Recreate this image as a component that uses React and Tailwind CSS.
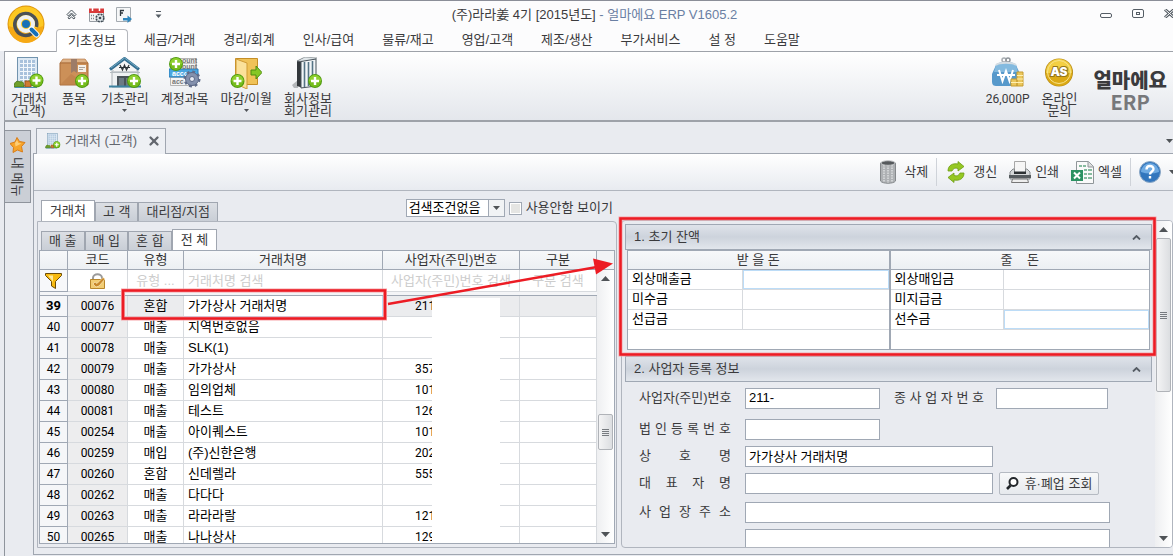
import { useState } from 'react';
import { FiX } from 'react-icons/fi';

const menus = ['세금/거래', '경리/회계', '인사/급여', '물류/재고', '영업/고객', '제조/생산', '부가서비스', '설 정', '도움말'];

const customers = [
  { no: 39, code: '00076', type: '혼합', name: '가가상사 거래처명', biz: '211' },
  { no: 40, code: '00077', type: '매출', name: '지역번호없음', biz: '' },
  { no: 41, code: '00078', type: '매출', name: 'SLK(1)', biz: '' },
  { no: 42, code: '00079', type: '매출', name: '가가상사', biz: '357' },
  { no: 43, code: '00080', type: '매출', name: '임의업체', biz: '101' },
  { no: 44, code: '00081', type: '매출', name: '테스트', biz: '126' },
  { no: 45, code: '00254', type: '매출', name: '아이퀘스트', biz: '101' },
  { no: 46, code: '00259', type: '매입', name: '(주)신한은행', biz: '202' },
  { no: 47, code: '00260', type: '혼합', name: '신데렐라', biz: '555' },
  { no: 48, code: '00262', type: '매출', name: '다다다', biz: '' },
  { no: 49, code: '00263', type: '매출', name: '라라라랄', biz: '121' },
  { no: 50, code: '00265', type: '매출', name: '나나상사', biz: '129' },
];

const receivables = [
  { label: '외상매출금', active: true },
  { label: '미수금' },
  { label: '선급금' },
];

const payables = [
  { label: '외상매입금' },
  { label: '미지급금' },
  { label: '선수금', active: true },
];

const Plus = ({ x, y }) => (
  <g transform={`translate(${x} ${y})`}>
    <circle r="7" fill="#4f9a10" />
    <circle r="6" fill="#76bd1c" />
    <path d="M-6 0a6 6 0 0 1 12 0z" fill="#8fd02f" />
    <path d="M0-4v8M-4 0h8" stroke="#fff" strokeWidth="2.4" />
  </g>
);

const BuildingIcon = ({ className = 'w-[30px] h-8' }) => (
  <svg className={className} viewBox="0 0 30 32">
    <rect x="3.500" y=".5" width="20" height="28" fill="#dbe8f4" stroke="#7193ae" />
    <path d="M6 3h15v21H6z" fill="#a9c2dc" />
    <path d="M9.500 3v21M13.500 3v21M17.500 3v21M6 6.500h15M6 10.500h15M6 14.500h15M6 18.500h15M6 22.500h15" stroke="#f3f8fc" />
    <path d="M0 30c0-5 3-7 6-5 3-1 4 1 4 5z" fill="#6f9f2a" stroke="#4c7a1d" />
    <path d="M11 24h6v6h-6z" fill="#d07a34" stroke="#9a531d" />
    <path d="M1 30.500h22" stroke="#4b8fb0" />
    <Plus x={22.5} y={23.5} />
  </svg>
);

const BoxIcon = () => (
  <svg className="h-8 w-[30px]" viewBox="0 0 30 32">
    <path d="M4 2h22l3 4v22H1V6z" fill="#c98b52" />
    <path d="M4 2h22l3 4H1z" fill="#ddb186" stroke="#b1743f" strokeWidth=".6" />
    <path d="M1 6h28v22H1z" fill="#cc9058" stroke="#a96c3a" />
    <path d="M1 28L12 17l17 11z" fill="#bd7f49" opacity=".6" />
    <path d="M12 2h6v14l-3-2-3 2z" fill="#9d7c68" />
    <path d="M19 8h8v7h-8z" fill="#f5efe8" />
    <path d="M20 10.500h6M20 12.500h4" stroke="#a9a39c" />
    <Plus x={23} y={24} />
  </svg>
);

const HouseIcon = () => (
  <svg className="h-8 w-8" viewBox="0 0 32 32">
    <path d="M3 14h26v16H3z" fill="#eef1f3" stroke="#a9b0b5" />
    <path d="M5 10L16 2l11 8v4H5z" fill="#f5f5f5" />
    <path d="M1 12.500L15.500 1.500 30 12.500" fill="none" stroke="#356f91" strokeWidth="3" />
    <path d="M2 11L15.500 1 29 11" fill="none" stroke="#71abc4" />
    <path d="M11 8l2.500 5L15.500 8l2 5L20 8M10 10.500h11" fill="none" stroke="#2c3338" strokeWidth="1.200" />
    <path d="M1 15.500h30" stroke="#b5bcc1" />
    <path d="M8 19h15v11H8z" fill="#4a535a" />
    <path d="M10 21h5v9h-5zM17 21h5v9h-5z" fill="#6c7a84" />
    <path d="M0 29.500h32" stroke="#3d82a0" strokeWidth="2" />
    <Plus x={25} y={24} />
  </svg>
);

const AccountIcon = () => (
  <svg className="h-8 w-8" viewBox="0 0 32 32">
    <path d="M1.500 1.500h26v27h-26z" fill="#f4f4f4" stroke="#b5b5b5" />
    <path d="M1.500 6.500h26M1.500 20.500h26" stroke="#c4c4c4" />
    <path d="M0 12h29v8H0z" fill="#4aa6e0" stroke="#2b7cb8" />
    <g fontSize="7" fontWeight="700" className="[font-family:'Liberation_Sans',sans-serif]">
      <text x="13" y="6" fill="#777">ount</text>
      <text x="13" y="11.500" fill="#777">ount</text>
      <text x="3" y="18.500" fill="#fff">acco</text>
      <text x="3" y="26.500" fill="#777">acc</text>
    </g>
    <circle cx="23" cy="22" r="7" fill="none" stroke="#626f8c" strokeWidth="3" strokeDasharray="2.750 2.750" />
    <circle cx="23" cy="22" r="6.500" fill="#8491ad" stroke="#5c6887" />
    <circle cx="23" cy="22" r="2.500" fill="#e6eaf2" stroke="#5c6887" />
    <Plus x={7} y={7} />
  </svg>
);

const FolderIcon = () => (
  <svg className="h-8 w-8" viewBox="0 0 32 32">
    <path d="M5.500 1.500h22v26h-22z" fill="#f0c257" stroke="#c58e26" />
    <path d="M6 2l11 4v26L6 27z" fill="#fbe19a" stroke="#cf9b35" />
    <path d="M21 13h5V9l6 6.500-6 6.500v-4h-5z" fill="#86c725" stroke="#4e8d12" />
    <Plus x={7.5} y={24} />
  </svg>
);

const BinderIcon = () => (
  <svg className="h-8 w-8" viewBox="0 0 32 32">
    <path d="M0 28l6-5v8H2z" fill="#8a8f93" opacity=".6" />
    <path d="M5 4l6-3v30l-6-2z" fill="#33383c" />
    <path d="M5 4l8-4 12 1-7 4z" fill="#dfe5e8" stroke="#70787e" strokeWidth=".6" />
    <path d="M9 4.500L24 2v27l-15 2z" fill="#f2f6f8" stroke="#47525a" />
    <path d="M12.500 5v25M16.500 5v24M20.500 4v24" stroke="#557485" strokeWidth="1.600" />
    <Plus x={23} y={24} />
  </svg>
);

const WalletIcon = () => (
  <svg className="h-8 w-8" viewBox="0 0 32 32">
    <circle cx="12" cy="3" r="2" fill="none" stroke="#a8adb2" strokeWidth="1.500" />
    <circle cx="16" cy="3" r="2" fill="none" stroke="#8f959b" strokeWidth="1.500" />
    <path d="M4 8c2-4 18-4 20 0l4 9v8c0 3-2 4-4 4H4c-2 0-4-1-4-4v-8z" fill="#5799cb" />
    <path d="M4 8c2-4 18-4 20 0l2 7H2z" fill="#83badf" />
    <path d="M4 8c3-3 17-3 20 0" fill="none" stroke="#d4dce2" strokeWidth="2" />
    <path d="M7 13l3.500 11L14 14l3.500 10L21 13M5 18h18" fill="none" stroke="#fff" strokeWidth="2" />
    <path d="M19 22h6v7h-6zM25 15h6v14h-6z" fill="#ebc75c" stroke="#c79d31" />
    <path d="M19 25.500h12M25 18.500h6M25 22h6" stroke="#fff0b2" />
  </svg>
);

const AsIcon = () => (
  <svg className="h-8 w-[30px]" viewBox="0 0 30 32">
    <circle cx="15" cy="15.500" r="14" fill="#b98d16" />
    <circle cx="15" cy="15" r="13" fill="#f3cf43" />
    <path d="M2 16a13 13 0 0 0 26 0z" fill="#dba914" />
    <circle cx="15" cy="15" r="11.500" fill="none" stroke="#f8e38a" />
    <text x="15" y="19" textAnchor="middle" fontSize="12" fontWeight="900" fill="#fff" stroke="#94741a" strokeWidth="2" paintOrder="stroke" className="[font-family:'Inter',sans-serif]">AS</text>
  </svg>
);

const LogoIcon = () => (
  <svg className="size-[38px]" viewBox="0 0 38 38">
    <circle cx="19" cy="19" r="18.500" fill="#dc930c" />
    <circle cx="19" cy="19" r="17.500" fill="#fdc822" />
    <path d="M2 21a17 17 0 0 0 34 0c-9 4-25 4-34 0z" fill="#f6a915" />
    <path d="M25 28.500A11 11 0 1 1 29.500 22" fill="none" stroke="#4b5055" strokeWidth="3.500" />
    <circle cx="19" cy="19" r="7" fill="none" stroke="#eef0f1" strokeWidth="4" />
    <circle cx="19" cy="19" r="4" fill="#1670b8" />
    <path d="M24.500 24.500l5 5" stroke="#fff" strokeWidth="6" strokeLinecap="round" />
    <path d="M24.500 24.500l5 5" stroke="#1670b8" strokeWidth="4" strokeLinecap="round" />
  </svg>
);

const QuickIcons = () => (
  <>
    <button aria-label="접기">
      <svg className="h-3 w-3" viewBox="0 0 12 12">
        <path d="M1 5.500L5.500 1 10 5.500 8.500 7 5.500 4 2.500 7zM2 8.500L5.500 5.500 9 8.500 8 10 5.500 8 3 10z" fill="#f2f4f6" stroke="#4d565e" />
      </svg>
    </button>
    <button aria-label="일정">
      <svg className="size-4" viewBox="0 0 16 16">
        <path d="M.5 2.500h14v12H.5z" fill="#f4f4f4" stroke="#969ca2" />
        <path d="M0 1.500h15V6H0z" fill="#d93a3a" />
        <path d="M3.500 0v4M10.500 0v4" stroke="#fff" strokeWidth="1.500" />
        <path d="M2 8.500h3M2 11.500h3" stroke="#7c858d" strokeWidth="1.500" strokeDasharray="1 1" />
        <circle cx="11" cy="11" r="3.800" fill="#dfe6ea" stroke="#3f4b54" strokeWidth="1.600" strokeDasharray="2 1" />
        <circle cx="11" cy="11" r="1.300" fill="#3f4b54" />
      </svg>
    </button>
    <button aria-label="바로가기">
      <svg className="size-4" viewBox="0 0 16 16">
        <path d="M.5.5h14v14H.5z" fill="#f6f7f8" stroke="#a5abb1" />
        <path d="M4.500 9V3.500H8M4.500 6H7" fill="none" stroke="#31393f" strokeWidth="1.300" />
        <path d="M7 11h4.500V8.500L16 12l-4.500 4v-2.500H7z" fill="#2e86bd" />
      </svg>
    </button>
    <button aria-label="사용자 지정" className="ml-3">
      <svg className="h-2 w-[7px]" viewBox="0 0 7 8">
        <path d="M1 .5h5" stroke="#555d65" />
        <path d="M.5 3.500h6L3.500 7z" fill="#555d65" />
      </svg>
    </button>
  </>
);

const TrashIcon = () => (
  <svg className="h-6 w-4" viewBox="0 0 16 24">
    <path d="M.5 3v18c2 3 13 3 15 0V3z" fill="#aeb1b4" stroke="#85898c" />
    <path d="M4 5v17M8 5v18M12 5v17" stroke="#dcdedf" strokeDasharray="1.500 1" strokeWidth="1.500" />
    <ellipse cx="8" cy="3" rx="7" ry="2.300" fill="#55595c" stroke="#c2c5c7" />
  </svg>
);

const RefreshIcon = () => (
  <svg className="h-[22px] w-[18px]" viewBox="0 0 18 22">
    <path d="M1 10C1 4 6 2 11 3V.5L17 5.500 11 10V7.500C8 6.500 6 7.500 5 10z" fill="#95c823" stroke="#6d9c14" strokeWidth=".8" />
    <path d="M17 12c0 6-5 8-10 7v2.500L1 16.500 7 12v2.500c3 1 5 0 6-2.500z" fill="#95c823" stroke="#6d9c14" strokeWidth=".8" />
  </svg>
);

const PrinterIcon = () => (
  <svg className="h-[22px] w-[22px]" viewBox="0 0 22 22">
    <path d="M5.500.5h11V12h-11z" fill="#f6f6f6" stroke="#a7a7a7" />
    <path d="M1 11l3-3h1.500v4h11V8H18l3 3v7H1z" fill="#d5d7d8" stroke="#85898b" />
    <path d="M5 10.500h12V13H5z" fill="#2e3234" />
    <path d="M0 14h22v3H0z" fill="#565b5e" />
    <path d="M3.500 18h15l1 3.500h-17z" fill="#eee" stroke="#777" />
  </svg>
);

const ExcelIcon = () => (
  <svg className="h-[23px] w-[23px]" viewBox="0 0 23 23">
    <path d="M5.500.5h12l5 5v17h-17z" fill="#fafafa" stroke="#8f9699" />
    <path d="M17 .5v5.500h5.500" fill="#ddd" stroke="#8f9699" />
    <path d="M8 4h3v2H8zM12 4h3v2h-3zM13 8h3v2h-3zM17 8h4v2h-4zM13 12h3v2h-3zM17 12h4v2h-4zM13 16h3v2h-3zM17 16h4v2h-4z" fill="#86bb9f" />
    <path d="M0 9h12v11H0z" fill="#2c9263" />
    <path d="M3 11.500l6 6M9 11.500l-6 6" stroke="#fff" strokeWidth="2" />
  </svg>
);

const HelpIcon = () => (
  <svg className="h-[22px] w-[22px]" viewBox="0 0 22 22">
    <circle cx="11" cy="11" r="10.500" fill="#3276bd" stroke="#8aa7c5" />
    <path d="M2 11a9 9 0 0 1 18 0c-6 2-12 2-18 0z" fill="#6eaae2" />
    <path d="M7.500 8.500c0-4.500 7-4.500 7-.5 0 2.500-3.500 2.500-3.500 5.500M11 15v2.500" fill="none" stroke="#fff" strokeWidth="2.400" />
  </svg>
);

const FunnelIcon = () => (
  <svg className="h-4 w-[17px]" viewBox="0 0 17 16">
    <path d="M.5.5h16v2l-6 6v7l-4-2.500V8.500l-6-6z" fill="#f7b90d" stroke="#6b4c09" />
    <path d="M3 2.500h5v9L7.500 8z" fill="#ffe99a" />
  </svg>
);

const LockIcon = () => (
  <svg className="h-4 w-[18px]" viewBox="0 0 18 16">
    <path d="M4 7V5c0-5 9-5 9 0v2" fill="none" stroke="#9a9a9a" strokeWidth="2" />
    <path d="M1.500 6.500h14v9h-14z" fill="#f2cd74" stroke="#b8862b" />
    <path d="M4 11l3 3 3-1 6-7-2-1.500-6 6L6 9z" fill="#c9892c" stroke="#fff3cf" strokeWidth=".6" />
  </svg>
);

const StarIcon = () => (
  <svg className="size-4" viewBox="0 0 16 16">
    <path d="M7 .5l2.500 4 5.500 1-3.500 4 1 5.500-5-2-4.500 2.500.5-5L0 6.500l5-1.500z" fill="#f7a52b" stroke="#d87d18" />
    <path d="M7 3l1.500 3 3 .5-6 3L5 6z" fill="#fdce77" />
  </svg>
);

const Caret = ({ up = false, className = 'h-[5px] w-[9px]' }) => (
  <svg className={`shrink-0 ${className}`} viewBox="0 0 9 5">
    <path d={up ? 'M0 5h9L4.500 0z' : 'M0 0h9L4.500 5z'} fill="#4f5357" />
  </svg>
);

const RibbonButton = ({ icon, lines, menu, labelClass = '' }) => (
  <button className="flex flex-col items-center text-[13px] leading-[12px]">
    {icon}
    <span className={`mt-1 whitespace-pre-line text-center ${labelClass}`}>{lines}</span>
    {menu && <Caret className="mt-1 h-[3px] w-[5px]" />}
  </button>
);

const SubTab = ({ active, children }) => (
  <button
    className={
      active
        ? 'h-[21px] border border-b-0 border-[#a0a6b0] bg-white px-2 whitespace-nowrap'
        : 'h-[19px] border border-b-0 border-[#a0a6b0] bg-gradient-to-b from-[#dcdfe4] to-[#c9ced6] px-[7px] whitespace-nowrap'
    }
  >
    {children}
  </button>
);

const ScrollBar = ({ thumb }) => (
  <div className="flex w-[17px] shrink-0 flex-col items-center bg-gradient-to-r from-[#eeeff1] to-white">
    <Caret up className="mt-1.5 h-[5px] w-[9px]" />
    <div className="relative w-full flex-1">
      <div className={`absolute inset-x-px flex flex-col items-center justify-center gap-px rounded-xs border border-[#b0b3b8] bg-gradient-to-r from-[#f4f4f5] to-[#dcdee1] ${thumb}`}>
        {[0, 1, 2, 3].map(i => <span key={i} className="h-px w-[7px] bg-[#777b80]" />)}
      </div>
    </div>
    <Caret className="mb-1.5 h-[5px] w-[9px]" />
  </div>
);

const SectionHeader = ({ title }) => (
  <button className="flex h-[26px] w-full shrink-0 items-center justify-between border border-[#a0a8b4] bg-gradient-to-b from-[#dfe3ea] via-[#cdd3dc] to-[#e2e6ec] px-2">
    {title}
    <svg className="mr-0.5 h-[5px] w-[9px]" viewBox="0 0 9 5">
      <path d="M1 4.500l3.500-3.500L8 4.500" fill="none" stroke="#555c64" strokeWidth="1.800" />
    </svg>
  </button>
);

const BalanceTable = ({ title, rows }) => (
  <table className="w-full table-fixed border-separate border-spacing-0">
    <colgroup>
      <col className="w-[44%]" />
      <col />
    </colgroup>
    <thead>
      <tr>
        <th colSpan={2} className="h-[19px] border-b border-[#a0a8b4] bg-gradient-to-b from-[#f7f8fa] to-[#eceff3] p-0 font-normal whitespace-pre">
          {title}
        </th>
      </tr>
    </thead>
    <tbody>
      {rows.map(row => (
        <tr key={row.label} className="text-black">
          <td className="h-5 border-r border-b border-[#d7dade] p-0 pb-0.5 pl-1">
            <label htmlFor={row.label}>{row.label}</label>
          </td>
          <td className="h-5 border-b border-[#d7dade] p-0">
            <input id={row.label} className={`block h-[19px] w-full border px-1 outline-none ${row.active ? 'border-[#bcdcf7]' : 'border-transparent'}`} />
          </td>
        </tr>
      ))}
    </tbody>
  </table>
);

const Field = ({ id, label, width, value = '', className = '', children }) => (
  <div className={`flex h-[21px] shrink-0 items-center ${className}`}>
    {label ? (
      <label htmlFor={id} className="mx-3.5 w-[92px] shrink-0 pb-0.5 whitespace-nowrap [text-align-last:justify]">{label}</label>
    ) : (
      <span className="w-[120px] shrink-0" />
    )}
    <input id={id} aria-label={label || '상세주소'} defaultValue={value} className={`h-[21px] shrink-0 border border-[#a0a8b4] bg-white px-[3px] pb-0.5 text-black outline-none ${width}`} />
    {children}
  </div>
);

const CustomerList = () => {
  const [selected, setSelected] = useState(39);

  return (
    <section className="relative flex min-h-0 flex-col">
      <div className="flex h-[30px] shrink-0 items-end pl-1">
        <SubTab active>거래처</SubTab>
        <SubTab>고 객</SubTab>
        <SubTab>대리점/지점</SubTab>
        <div className="ml-auto mr-1 flex items-center gap-1 self-start pt-2">
          <div className="relative">
            <select aria-label="검색조건" className="block h-[18px] w-[99px] appearance-none border border-[#a0a8b4] bg-white pl-0.5 leading-4 text-black">
              <option>검색조건없음</option>
            </select>
            <span className="pointer-events-none absolute inset-y-px right-px flex w-4 items-center justify-center border-l border-[#a0a8b4] bg-[#f1f3f5]">
              <Caret className="h-1 w-[7px]" />
            </span>
          </div>
          <input id="unused" type="checkbox" className="size-[13px] appearance-none border border-[#a0a8b4] bg-[#e5e5e3] shadow-[inset_0_0_0_1px_#fff]" />
          <label htmlFor="unused" className="whitespace-nowrap">사용안함 보이기</label>
        </div>
      </div>

      <div className="flex min-h-0 flex-1 flex-col rounded-tr-sm border border-[#b0b5be] pr-px pb-[3px] pl-px">
        <div className="flex h-7 shrink-0 items-end pl-0.5">
          <SubTab>매 출</SubTab>
          <SubTab>매 입</SubTab>
          <SubTab>혼 합</SubTab>
          <SubTab active>전 체</SubTab>
        </div>
        <div className="relative flex min-h-0 flex-1 overflow-hidden border border-[#a0a8b4] bg-white">
          <div className="min-w-0 flex-1 overflow-hidden">
            <table className="w-full table-fixed border-separate border-spacing-0 text-black">
              <colgroup>
                <col className="w-7" />
                <col className="w-[60px]" />
                <col className="w-14" />
                <col />
                <col className="w-[137px]" />
                <col className="w-[77px]" />
              </colgroup>
              <thead className="text-[#333]">
                <tr>
                  {['', '코드', '유형', '거래처명', '사업자(주민)번호', '구분'].map(title => (
                    <th key={title} className="h-[19px] border-r border-b border-[#a0a8b4] bg-gradient-to-b from-[#f7f8fa] to-[#eceff3] p-0 leading-[18px] font-normal">
                      {title}
                    </th>
                  ))}
                </tr>
                <tr>
                  <td className="h-[22px] border-r border-b border-[#a0a8b4] bg-[#f7f8fa] p-0"><span className="flex justify-center"><FunnelIcon /></span></td>
                  <td className="h-[22px] border-r border-b border-[#d7dade] p-0"><span className="flex justify-center"><LockIcon /></span></td>
                  {['유형 ...', '거래처명 검색', '사업자(주민)번호 검색', '구분 검색'].map((hint, i) => (
                    <td key={hint} className="h-[22px] border-r border-b border-[#d7dade] p-0">
                      <input aria-label={hint} placeholder={hint} className={`block w-full px-1 outline-none placeholder:text-[#cdcdcd] ${i === 1 ? '' : 'text-center'}`} />
                    </td>
                  ))}
                </tr>
                <tr><td colSpan={6} className="h-1 border-b border-[#a0a8b4] bg-[#f4f5f7] p-0" /></tr>
              </thead>
              <tbody>
                {customers.map(c => (
                  <tr key={c.no} onClick={() => setSelected(c.no)} className={c.no === selected ? 'bg-[#ebecee]' : 'bg-white'}>
                    <td className={`h-[21px] border-r border-b border-[#a0a8b4] bg-[#f5f6f8] p-0 text-center leading-5 [font-family:'Roboto',sans-serif] ${c.no === selected ? 'font-bold' : 'text-xs leading-5'}`}>{c.no}</td>
                    <td className="border-r border-b border-[#d7dade] bg-[#ededee] p-0 text-center text-xs leading-5 [font-family:'Roboto',sans-serif]">{c.code}</td>
                    <td className="border-r border-b border-[#d7dade] p-0 text-center leading-5">{c.type}</td>
                    <td className={`border-r border-b p-0 pl-1 leading-5 ${c.no === selected ? 'border-[#bcdcf7] bg-white' : 'border-[#d7dade]'}`}>{c.name}</td>
                    <td className="border-r border-b border-[#d7dade] p-0 pl-8 text-xs leading-5 [font-family:'Roboto',sans-serif]">{c.biz}</td>
                    <td className="border-r border-b border-[#d7dade] p-0" />
                  </tr>
                ))}
              </tbody>
            </table>
          </div>
          <div className="flex flex-col">
            <div className="h-[19px] shrink-0 border-b border-[#a0a8b4] bg-[#f1f3f6]" />
            <div className="flex min-h-0 flex-1">
              <ScrollBar thumb="top-[53%] h-9" />
            </div>
          </div>
          <div className="absolute top-[47px] right-[114px] bottom-0 w-[68px] bg-white" />
        </div>
      </div>
    </section>
  );
};

const CustomerDetail = () => (
  <section className="mt-[29px] flex min-h-0 overflow-hidden rounded-sm border border-[#b0b5be] pl-[3px]">
    <div className="flex min-w-0 flex-1 flex-col overflow-hidden pt-[3px] pr-[3px]">
      <SectionHeader title="1. 초기 잔액" />
      <div className="mx-0.5 mb-1.5 grid h-[100px] shrink-0 grid-cols-2 items-start border border-[#a0a8b4] bg-white">
        <BalanceTable title="받 을 돈" rows={receivables} />
        <div className="h-full border-l-2 border-[#a0a8b4]">
          <BalanceTable title="줄    돈" rows={payables} />
        </div>
      </div>
      <SectionHeader title="2. 사업자 등록 정보" />
      <Field id="bizNo" label="사업자(주민)번호" width="w-[135px]" value="211-" className="mt-1.5">
        <label htmlFor="subNo" className="mr-3 ml-3.5 w-[90px] shrink-0 pb-0.5 whitespace-nowrap [text-align-last:justify]">종 사 업 자 번 호</label>
        <input id="subNo" className="h-[21px] w-28 border border-[#a0a8b4] bg-white px-[3px] outline-none" />
      </Field>
      <Field id="corpNo" label="법 인 등 록 번 호" width="w-[135px]" className="mt-2.5" />
      <Field id="company" label="상 호 명" width="w-[248px]" value="가가상사 거래처명" className="mt-1.5" />
      <Field id="owner" label="대 표 자 명" width="w-[248px]" className="mt-1.5">
        <button className="ml-1.5 flex h-[23px] w-[100px] shrink-0 items-center justify-center gap-1.5 rounded-xs border border-[#b5bac2] bg-gradient-to-b from-[#f8f9fa] to-[#e6e9ed] whitespace-nowrap">
          <svg className="size-[13px]" viewBox="0 0 13 13">
            <circle cx="7.500" cy="5" r="4" fill="#fff" stroke="#22262a" strokeWidth="2" />
            <path d="M4.500 8.500L1 12" stroke="#22262a" strokeWidth="2.600" />
          </svg>
          휴·폐업 조회
        </button>
      </Field>
      <Field id="address" label="사 업 장 주 소" width="w-[365px]" className="mt-2" />
      <Field id="address2" width="w-[365px]" className="mt-1.5" />
    </div>
    <ScrollBar thumb="top-1.5 h-[154px]" />
  </section>
);

const App = () => (
  <div className="relative flex h-screen flex-col overflow-hidden border-t border-[#8b8e98] bg-[#e9ebf0] text-[13px] leading-4 text-[#3a3a3c] [font-family:'Liberation_Sans','Noto_Sans_CJK_KR',sans-serif]">
    <header className="flex h-[50px] shrink-0 bg-[#fcfcfd]">
      <div className="relative z-10 ml-[7px] w-[49px] pt-1"><LogoIcon /></div>
      <div className="flex min-w-0 flex-1 flex-col">
        <div className="relative flex h-7 shrink-0 items-center gap-[11px] pl-2.5">
          <QuickIcons />
          <h1 className="absolute top-1.5 right-10 left-0 text-center text-[13px]">
            (주)라라姜 4기 [2015년도] <span className="text-[#6a7fa3]">- 얼마에요 ERP V1605.2</span>
          </h1>
          <div className="absolute top-2 -right-0.5 flex items-center gap-5">
            <button aria-label="최소화" className="mt-1 h-[5px] w-3 rounded-xs border border-[#555d65]" />
            <button aria-label="최대화" className="flex h-[9px] w-3 items-center justify-center rounded-xs border border-[#555d65]"><span className="h-[3px] w-1 border border-[#555d65]" /></button>
            <button aria-label="닫기">
              <svg className="h-[9px] w-[11px]" viewBox="0 0 11 9">
                <path d="M1 .5L10 8.500M10 .5L1 8.500" stroke="#555d65" strokeWidth="3" />
                <path d="M1 .5L10 8.500M10 .5L1 8.500" stroke="#fff" />
              </svg>
            </button>
          </div>
        </div>
        <nav className="flex h-[22px] items-center gap-1">
          <button className="relative z-10 h-[23px] rounded-t-sm border border-b-0 border-[#b4b7bd] bg-white px-[11px] whitespace-nowrap">기초정보</button>
          {menus.map(m => <button key={m} className="px-3 whitespace-nowrap">{m}</button>)}
        </nav>
      </div>
    </header>

    <div className="ml-1 flex h-[71px] shrink-0 justify-between border-t border-b-2 border-l border-[#9ea2a9] bg-gradient-to-b from-white to-[#e4e7ec] pt-[5px]">
      <div className="flex items-start gap-3 pl-1.5">
        <RibbonButton icon={<BuildingIcon />} lines={'거래처\n(고객)'} />
        <RibbonButton icon={<BoxIcon />} lines="품목" />
        <RibbonButton icon={<HouseIcon />} lines="기초관리" menu />
        <RibbonButton icon={<AccountIcon />} lines="계정과목" />
        <RibbonButton icon={<FolderIcon />} lines="마감/이월" menu />
        <RibbonButton icon={<BinderIcon />} lines={'회사정보\n회기관리'} />
      </div>
      <div className="flex items-start gap-3 pr-1.5">
        <RibbonButton icon={<WalletIcon />} lines="26,000P" labelClass="text-xs leading-[12px] [font-family:'Roboto',sans-serif]" />
        <RibbonButton icon={<AsIcon />} lines={'온라인\n문의'} />
        <div className="pt-3 pl-1 text-center text-[20px] leading-[22px] font-black text-[#3b3b3d] [font-family:'Noto_Sans_CJK_KR',sans-serif]">
          <div>얼마에요</div>
          <div className="font-bold text-[#77787b]">ERP</div>
        </div>
      </div>
    </div>

    <div className="ml-1 flex min-h-0 flex-1 border-l border-[#8f949c]">
      <aside className="w-7 shrink-0 pt-2">
        <button className="flex h-[73px] w-[26px] flex-col items-center gap-1 border border-l-0 border-[#8f949c] bg-[#cbcfd6] pt-1.5">
          <StarIcon />
          <span className="leading-none [text-orientation:sideways] [writing-mode:vertical-rl]">내 메뉴</span>
        </button>
      </aside>
      <div className="flex min-w-0 flex-1 flex-col pb-px">
        <div className="flex h-[31px] shrink-0 items-end justify-between pl-[3px]">
          <div className="relative z-10 -mb-px flex h-[26px] items-center border border-b-0 border-[#a0a6b0] bg-[#eef0f4] pb-0.5 pl-2 text-[#63676e]">
            <BuildingIcon className="size-4" />
            <span className="ml-1 whitespace-nowrap">거래처 (고객)</span>
            <button aria-label="탭 닫기" className="ml-2.5 pr-1"><FiX className="size-3.5" strokeWidth={4} /></button>
          </div>
          <Caret className="mb-2.5 h-1 w-[7px]" />
        </div>
        <div className="flex min-h-0 flex-1 flex-col border-t border-b border-l border-[#a0a6b0]">
          <div className="flex h-[37px] shrink-0 items-center justify-end overflow-hidden border-b border-[#b0b5be] bg-gradient-to-b from-white to-[#e8ebf0] whitespace-nowrap">
            <button className="flex items-center gap-2"><TrashIcon />삭제</button>
            <span className="mx-2 h-7 w-px bg-[#cfd3d9]" />
            <button className="ml-0.5 flex items-center gap-2"><RefreshIcon />갱신</button>
            <button className="ml-3 flex items-center gap-1"><PrinterIcon />인쇄</button>
            <button className="ml-3 flex items-center gap-1"><ExcelIcon />엑셀</button>
            <span className="mx-2 h-7 w-px bg-[#cfd3d9]" />
            <button aria-label="도움말"><HelpIcon /></button>
            <Caret className="ml-2 -mr-[3px] h-1 w-[7px]" />
          </div>
          <main className="grid min-h-0 flex-1 grid-cols-[580fr_552fr] grid-rows-[minmax(0,1fr)] gap-1 pb-1.5 pl-[3px]">
            <CustomerList />
            <CustomerDetail />
          </main>
        </div>
      </div>
    </div>

    {/* callout from the selected customer to its opening balance */}
    <svg className="pointer-events-none absolute -top-px left-0 z-20 h-[556px] w-[1173px]" viewBox="0 0 1173 556">
      <g fill="none" stroke="#f5a3a8" strokeWidth="4">
        <path d="M123 290.500h262v28H123zM620.500 218.500h534v136h-534z" />
      </g>
      <g fill="none" stroke="#ec1c24" strokeWidth="2.500">
        <path d="M123 290.500h262v28H123zM620.500 218.500h534v136h-534zM388 304L597 267" />
      </g>
      <path d="M593 258.500l20 5-17 11z" fill="#ec1c24" />
    </svg>
  </div>
);

export default App;
